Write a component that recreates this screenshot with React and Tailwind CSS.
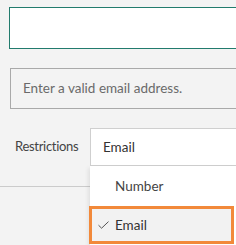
import React from "react";

const font = { fontFamily: 'Lato, "Open Sans", sans-serif' };

function CheckIcon() {
  return (
    <svg width="11" height="8" viewBox="0 0 11 8" fill="none">
      <path d="M0.5 4.2 L3.6 7.2 L10.5 0.6" stroke="#555" strokeWidth="1" />
    </svg>
  );
}

const App = () => {
  return (
    <div
      className="relative w-[236px] h-[245px] overflow-hidden bg-[#f3f3f3] text-[13.5px]"
      style={font}
    >
      {/* text input, focused */}
      <div className="pt-[7px] pl-[9px]">
        <div className="h-[42px] border border-r-0 border-[#227b6d] bg-white" />
      </div>

      {/* validation message */}
      <div className="pt-[19px] pl-[10px]">
        <div className="h-[41px] flex items-center pl-[12px] border border-r-0 border-[#a9a9a9] text-[#6a6a6a]">
          Enter a valid email address.
        </div>
      </div>

      {/* restrictions row */}
      <div className="pt-[19px] flex items-center">
        <span className="pl-[15px] w-[90px] text-[13px] tracking-[-0.3px] text-[#444]">Restrictions</span>
        <div className="flex-1 h-[38px] flex items-center pl-[12px] bg-white border border-r-0 border-[#cfcfcf] text-[#333]">
          Email
        </div>
      </div>

      <hr className="mt-[20px] border-[#cbcbcb]" />

      {/* dropdown menu */}
      <div className="absolute left-[90px] top-[166px] right-0 bottom-0 bg-white shadow-[-2px_2px_4px_rgba(0,0,0,0.08)]">
        <div className="h-[40px] flex items-center pl-[25px] text-[#444]">Number</div>
        <div className="h-[38px] mr-[2px] -ml-[1px] flex items-center gap-[6px] pl-[6px] bg-[#f2f2f2] border-[3px] border-[#f2893a] text-[#333]">
          <CheckIcon />
          <span>Email</span>
        </div>
      </div>
    </div>
  );
};

export default App;
